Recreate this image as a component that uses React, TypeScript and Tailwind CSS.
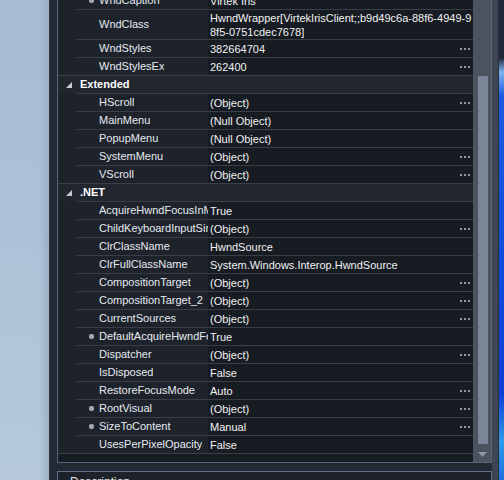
import React from "react";

type Row =
  | { kind: "cat"; label: string }
  | { kind: "prop"; name: string; value: string[]; dots?: boolean; icon?: boolean };

const rows: Row[] = [
  { kind: "prop", name: "WndCaption", value: ["Virtek Iris"], icon: true },
  {
    kind: "prop",
    name: "WndClass",
    value: ["HwndWrapper[VirtekIrisClient;;b9d49c6a-88f6-4949-9", "8f5-0751cdec7678]"],
  },
  { kind: "prop", name: "WndStyles", value: ["382664704"], dots: true },
  { kind: "prop", name: "WndStylesEx", value: ["262400"], dots: true },
  { kind: "cat", label: "Extended" },
  { kind: "prop", name: "HScroll", value: ["(Object)"], dots: true },
  { kind: "prop", name: "MainMenu", value: ["(Null Object)"] },
  { kind: "prop", name: "PopupMenu", value: ["(Null Object)"] },
  { kind: "prop", name: "SystemMenu", value: ["(Object)"], dots: true },
  { kind: "prop", name: "VScroll", value: ["(Object)"], dots: true },
  { kind: "cat", label: ".NET" },
  { kind: "prop", name: "AcquireHwndFocusInMenuMode", value: ["True"] },
  { kind: "prop", name: "ChildKeyboardInputSinks", value: ["(Object)"], dots: true },
  { kind: "prop", name: "ClrClassName", value: ["HwndSource"] },
  { kind: "prop", name: "ClrFullClassName", value: ["System.Windows.Interop.HwndSource"] },
  { kind: "prop", name: "CompositionTarget", value: ["(Object)"], dots: true },
  { kind: "prop", name: "CompositionTarget_2", value: ["(Object)"], dots: true },
  { kind: "prop", name: "CurrentSources", value: ["(Object)"], dots: true },
  { kind: "prop", name: "DefaultAcquireHwndFocusInMenuMode", value: ["True"], icon: true },
  { kind: "prop", name: "Dispatcher", value: ["(Object)"], dots: true },
  { kind: "prop", name: "IsDisposed", value: ["False"] },
  { kind: "prop", name: "RestoreFocusMode", value: ["Auto"], dots: true },
  { kind: "prop", name: "RootVisual", value: ["(Object)"], dots: true, icon: true },
  { kind: "prop", name: "SizeToContent", value: ["Manual"], dots: true, icon: true },
  { kind: "prop", name: "UsesPerPixelOpacity", value: ["False"] },
];

function Dots() {
  return (
    <div className="flex gap-[2px]">
      <span className="h-[2px] w-[2px] bg-[#8e98a8]" />
      <span className="h-[2px] w-[2px] bg-[#8e98a8]" />
      <span className="h-[2px] w-[2px] bg-[#8e98a8]" />
    </div>
  );
}

function PropRow({ row }: { row: Extract<Row, { kind: "prop" }> }) {
  const tall = row.value.length > 1;
  return (
    <div className={tall ? "flex h-[30px]" : "flex h-[18px]"}>
      <div className="w-[19px] shrink-0 bg-[#1e232b]" />
      <div className="flex flex-1 border-t border-[#3a3f47]">
        <div
          className={
            "flex w-[131px] shrink-0 items-center overflow-hidden bg-[#1e232b] text-[#e6eaf0] " +
            (row.icon ? "pl-[12px]" : "pl-[22px]")
          }
        >
          {row.icon && <span className="mr-[5px] h-[5px] w-[5px] shrink-0 rounded-[2px] bg-[#a3a9b2]" />}
          <span className="block min-w-0 overflow-hidden whitespace-nowrap">{row.name}</span>
        </div>
        <div className="flex min-w-0 flex-1 items-center justify-between overflow-hidden bg-[#171b22] pl-[2px] pr-[3px] text-[#f2f2f2]">
          <div className="flex flex-col whitespace-nowrap leading-[14px]">
            {row.value.map((v) => (
              <span key={v}>{v}</span>
            ))}
          </div>
          {row.dots && <Dots />}
        </div>
      </div>
    </div>
  );
}

function CatRow({ label }: { label: string }) {
  return (
    <div className="flex h-[18px] items-center border-t border-[#3a3f47] bg-[#21262f] pl-[8px] font-bold text-white">
      <svg width="6" height="6" viewBox="0 0 6 6" className="mr-[8px]">
        <polygon points="6,0 6,6 0,6" fill="#c8ccd2" />
      </svg>
      {label}
    </div>
  );
}

export default function App() {
  return (
    <div
      className="flex h-[480px] w-[504px] overflow-hidden text-[11px]"
      style={{ fontFamily: '"Liberation Sans", Arial, sans-serif' }}
    >
      {/* desktop left */}
      <div className="w-[49px] shrink-0 bg-[linear-gradient(to_bottom,#a5bcd2,#b5c9db)]">
        <div className="ml-auto h-full w-[10px] bg-[linear-gradient(to_right,transparent,#9bb0c4)]" />
      </div>

      {/* window */}
      <div className="flex w-[450px] shrink-0 border-x border-[#2a2f38] bg-[#242a34]">
        <div className="flex w-[442px] flex-col pl-[7px]">
          {/* property grid */}
          <div className="flex h-[463px] shrink-0 border-x border-b border-[#56657a]">
            <div className="flex w-[415px] flex-col overflow-hidden">
              <div className="-mt-[9px] flex flex-col">
                {rows.map((r, i) =>
                  r.kind === "cat" ? <CatRow key={i} label={r.label} /> : <PropRow key={i} row={r} />
                )}
              </div>
              <div className="flex-1 border-t border-[#3a3f47] bg-[#171b22]" />
            </div>
            {/* scrollbar */}
            <div className="flex w-[18px] flex-col items-center bg-[#4a535e] pl-[1px]">
              <div className="mt-[76px] h-[368px] w-[10px] bg-[#7b8698]" />
              <svg width="9" height="5" viewBox="0 0 9 5" className="mt-[8px]">
                <polygon points="0,0 9,0 4.5,5" fill="#8d97a6" />
              </svg>
            </div>
          </div>

          {/* description panel */}
          <div className="mt-[8px] flex-1 overflow-hidden border-x border-t border-[#5e6e85] bg-[#1d222a] pl-[12px] pt-[3px] text-[12px] leading-[14px] text-[#e6e6e6]">
            Description
          </div>
        </div>
        <div className="w-[6px] shrink-0 bg-[#3d4552]" />
      </div>

      {/* desktop right */}
      <div className="w-[5px] shrink-0 bg-[linear-gradient(to_bottom,#1e2838_0%,#1e2838_12%,#7fb4ef_15%,#1a5ae0_20%,#0c3fd8_82%,#2f9be8_92%,#1e70e0_100%)]" />
    </div>
  );
}
